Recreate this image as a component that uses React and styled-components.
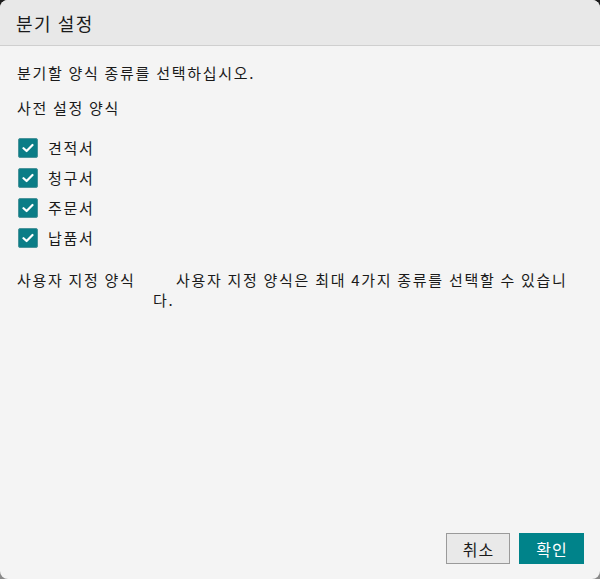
import React, { useState } from "react"
import styled, { createGlobalStyle } from "styled-components"

const GlobalStyle = createGlobalStyle`
  html, body {
    margin: 0;
    height: 100%;
  }
  body {
    background: linear-gradient(#1c1c1c, #8a8a8a);
    font-family: "Noto Sans CJK KR", "Noto Sans", sans-serif;
  }
  #root {
    height: 100%;
  }
`

const Dialog = styled.div`
  height: 100%;
  display: flex;
  flex-direction: column;
  background: #f4f4f4;
  border-radius: 8px;
  overflow: hidden;
  color: #1a1a1a;
`

const Header = styled.div`
  height: 46px;
  box-sizing: border-box;
  display: flex;
  align-items: center;
  padding: 0 16px;
  background: #e8e8e8;
  border-bottom: 1px solid #cfcfcf;
  font-size: 18px;
  letter-spacing: 1.5px;
`

const Body = styled.div`
  flex: 1;
  padding: 17px 18px 0 17px;
  font-size: 15px;
  line-height: 20px;
  letter-spacing: 1.7px;
`

const Paragraph = styled.div`
  margin-bottom: ${(p) => p.$gap || 0}px;
`

const CheckList = styled.div`
  display: flex;
  flex-direction: column;
  gap: 10px;
  margin-bottom: 22px;
  padding-left: 1px;
`

const CheckRow = styled.label`
  display: flex;
  align-items: center;
  gap: 10px;
  cursor: pointer;
`

const Box = styled.span`
  width: 20px;
  height: 20px;
  box-sizing: border-box;
  border-radius: 2px;
  border: 1px solid ${(p) => (p.$checked ? "#4a949b" : "#8a8a8a")};
  background: ${(p) => (p.$checked ? "#0b7d87" : "#fff")};
  display: flex;
  align-items: center;
  justify-content: center;
`

const CustomRow = styled.div`
  display: grid;
  grid-template-columns: 136px 1fr;
`

const Note = styled.div`
  text-indent: 23px;
`

const Footer = styled.div`
  display: flex;
  justify-content: flex-end;
  gap: 9px;
  padding: 0 16px 15px;
`

const Button = styled.button`
  width: ${(p) => p.$w}px;
  height: 31px;
  padding: 0 0 0 1px;
  font-family: inherit;
  font-size: 16px;
  letter-spacing: 1px;
  border: 1px solid ${(p) => (p.$primary ? "#00838a" : "#9a9a9a")};
  background: ${(p) => (p.$primary ? "#00838a" : "#e9e9e9")};
  color: ${(p) => (p.$primary ? "#fff" : "#1a1a1a")};
  cursor: pointer;
`

const forms = ["견적서", "청구서", "주문서", "납품서"]

export default function App() {
  const [checked, setChecked] = useState(forms.map(() => true))

  return (
    <>
      <GlobalStyle />
      <Dialog>
        <Header>분기 설정</Header>
        <Body>
          <Paragraph $gap={15}>분기할 양식 종류를 선택하십시오.</Paragraph>
          <Paragraph $gap={20}>사전 설정 양식</Paragraph>
          <CheckList>
            {forms.map((name, i) => (
              <CheckRow
                key={name}
                onClick={() =>
                  setChecked(checked.map((c, j) => (j === i ? !c : c)))
                }
              >
                <Box $checked={checked[i]}>
                  {checked[i] && (
                    <svg width="12" height="10" viewBox="0 0 12 10">
                      <path
                        d="M1.5 5.2 L4.6 8 L10.5 2"
                        fill="none"
                        stroke="#fff"
                        strokeWidth="2.2"
                        strokeLinecap="round"
                        strokeLinejoin="round"
                      />
                    </svg>
                  )}
                </Box>
                {name}
              </CheckRow>
            ))}
          </CheckList>
          <CustomRow>
            <div>사용자 지정 양식</div>
            <Note>사용자 지정 양식은 최대 4가지 종류를 선택할 수 있습니다.</Note>
          </CustomRow>
        </Body>
        <Footer>
          <Button $w={64}>취소</Button>
          <Button $w={65} $primary>
            확인
          </Button>
        </Footer>
      </Dialog>
    </>
  )
}
